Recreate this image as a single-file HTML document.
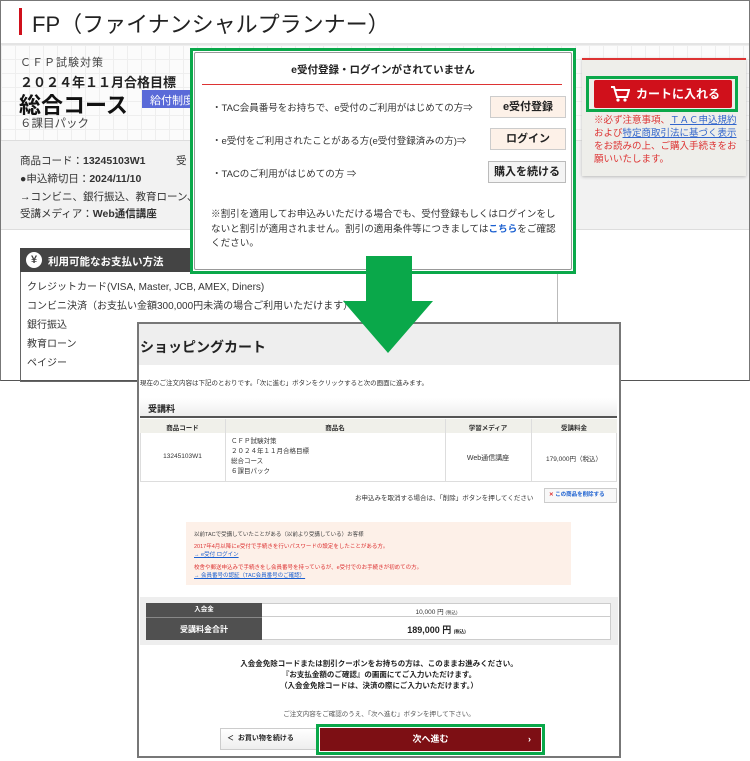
<!DOCTYPE html>
<html><head><meta charset="utf-8"><style>
*{margin:0;padding:0;box-sizing:border-box}
body{width:750px;height:761px;position:relative;background:#fff;font-family:"Liberation Sans","Noto Sans CJK JP",sans-serif;color:#333;overflow:hidden}
.a{position:absolute;white-space:nowrap}
.b{font-weight:bold}
</style></head><body>
<div class="a" style="left:0;top:0;width:750px;height:381px;border:1px solid #777;border-bottom:1px solid #555"></div>
<div class="a" style="left:19px;top:8px;width:3px;height:27px;background:#d0101b"></div>
<div class="a" style="left:32px;top:7px;font-size:22px;color:#222">FP（ファイナンシャルプランナー）</div>
<div class="a" style="left:1px;top:43px;width:748px;height:2px;background:#e4e4e4"></div>
<div class="a" style="left:1px;top:45px;width:748px;height:95px;background-color:#fbfbfb;background-image:linear-gradient(#eee 1px,transparent 1px),linear-gradient(90deg,#eee 1px,transparent 1px);background-size:14px 14px"></div>
<div class="a" style="left:1px;top:140px;width:748px;height:90px;background:#f2f2f2;border-top:1px solid #ddd;border-bottom:1px solid #ddd"></div>
<div class="a" style="left:20px;top:54px;font-size:11px;color:#444;letter-spacing:1px">ＣＦＰ試験対策</div>
<div class="a b" style="left:20px;top:72px;font-size:13px;color:#222">２０２４年１１月合格目標</div>
<div class="a b" style="left:19px;top:88px;font-size:22px;color:#111">総合コース</div>
<div class="a" style="left:142px;top:90px;width:50px;height:18px;background:#5a6ad8;color:#fff;font-size:11px;padding:2px 0 0 8px">給付制度</div>
<div class="a" style="left:20px;top:115px;font-size:11.5px;color:#444">６課目パック</div>
<div class="a" style="left:20px;top:153px;font-size:10.5px">商品コード：<b>13245103W1</b></div>
<div class="a" style="left:176px;top:153px;font-size:10.5px">受</div>
<div class="a" style="left:20px;top:171px;font-size:10.5px">●申込締切日：<b>2024/11/10</b></div>
<div class="a" style="left:20px;top:189px;font-size:10.5px">→コンビニ、銀行振込、教育ローン、ペ</div>
<div class="a" style="left:20px;top:206px;font-size:10.5px">受講メディア：<b>Web通信講座</b></div>
<div class="a" style="left:20px;top:248px;width:538px;height:134px;border:1px solid #666"></div>
<div class="a" style="left:20px;top:248px;width:538px;height:24px;background:#444"></div>
<div class="a" style="left:26px;top:252px;width:16px;height:16px;border-radius:50%;background:#fff;color:#444;font-size:11px;font-weight:bold;text-align:center;line-height:16px">¥</div>
<div class="a b" style="left:48px;top:254px;font-size:10.5px;color:#fff">利用可能なお支払い方法</div>
<div class="a" style="left:27px;top:278px;font-size:10px;line-height:19px;white-space:normal;width:520px">クレジットカード(VISA, Master, JCB, AMEX, Diners)<br>コンビニ決済（お支払い金額300,000円未満の場合ご利用いただけます）<br>銀行振込<br>教育ローン<br>ペイジー</div>
<div class="a" style="left:557px;top:230px;width:1px;height:151px;background:#bbb"></div>
<div class="a" style="left:582px;top:58px;width:164px;height:118px;background:#eeeeea;border-top:2px solid #d33;box-shadow:0 1px 3px #bbb"></div>
<div class="a" style="left:586px;top:76px;width:152px;height:36px;border:3px solid #0aa84a"></div>
<div class="a b" style="left:594px;top:80px;width:138px;height:28px;background:#d0101b;border-radius:2px;color:#fff;font-size:12px;line-height:28px;padding-left:42px">カートに入れる</div>
<svg class="a" style="left:610px;top:85px" width="20" height="18" viewBox="0 0 20 18"><path d="M1 2h3l3 10h10l2-7H5" fill="none" stroke="#fff" stroke-width="2"/><circle cx="8" cy="15" r="1.6" fill="#fff"/><circle cx="15" cy="15" r="1.6" fill="#fff"/></svg>
<div class="a" style="left:594px;top:114px;width:145px;font-size:9.5px;line-height:13px;color:#d33;white-space:normal">※必ず注意事項、<u style="color:#36c">ＴＡＣ申込規約</u>および<u style="color:#36c">特定商取引法に基づく表示</u>をお読みの上、ご購入手続きをお願いいたします。</div>
<div class="a" style="left:190px;top:48px;width:386px;height:226px;border:3px solid #0aa84a;background:#fff"></div>
<div class="a" style="left:194px;top:52px;width:378px;height:218px;border:1px solid #999;border-radius:2px"></div>
<div class="a b" style="left:194px;top:62px;width:378px;text-align:center;font-size:10.5px;color:#222">e受付登録・ログインがされていません</div>
<div class="a" style="left:202px;top:84px;width:360px;height:1px;background:#d33"></div>
<div class="a" style="left:212px;top:100px;font-size:9.5px">・TAC会員番号をお持ちで、e受付のご利用がはじめての方⇒</div>
<div class="a" style="left:212px;top:133px;font-size:9.5px">・e受付をご利用されたことがある方(e受付登録済みの方)⇒</div>
<div class="a" style="left:212px;top:166px;font-size:9.5px">・TACのご利用がはじめての方 ⇒</div>
<div class="a b" style="left:490px;top:96px;width:76px;height:22px;background:#fdf1e8;border:1px solid #ccc;font-size:11px;text-align:center;line-height:20px;color:#222">e受付登録</div>
<div class="a b" style="left:490px;top:128px;width:76px;height:22px;background:#fdf1e8;border:1px solid #ccc;font-size:11px;text-align:center;line-height:20px;color:#222">ログイン</div>
<div class="a b" style="left:488px;top:161px;width:78px;height:22px;background:#f4f4f4;border:1px solid #bbb;font-size:11px;text-align:center;line-height:20px;color:#222">購入を続ける</div>
<div class="a" style="left:211px;top:208px;width:352px;font-size:9.6px;line-height:14.5px;white-space:normal">※割引を適用してお申込みいただける場合でも、受付登録もしくはログインをしないと割引が適用されません。割引の適用条件等につきましては<b style="color:#1a5fd0">こちら</b>をご確認ください。</div>
<div class="a" style="left:137px;top:322px;width:484px;height:436px;border:2px solid #777;background:#fff"></div>
<div class="a" style="left:139px;top:324px;width:480px;height:41px;background:#eee"></div>
<div class="a b" style="left:140px;top:337px;font-size:14px;color:#222">ショッピングカート</div>
<div class="a" style="left:140px;top:377px;font-size:6.5px">現在のご注文内容は下記のとおりです。「次に進む」ボタンをクリックすると次の画面に進みます。</div>
<div class="a" style="left:140px;top:398px;width:477px;height:20px;background:linear-gradient(#fff,#eee);border-bottom:2px solid #555"></div>
<div class="a b" style="left:148px;top:402px;font-size:9px;color:#222">受講料</div>
<div class="a" style="left:140px;top:419px;width:477px;height:63px;border:1px solid #ddd"></div>
<div class="a" style="left:140px;top:419px;width:477px;height:14px;background:#f0f0ea"></div>
<div class="a" style="left:225px;top:419px;width:1px;height:63px;background:#ddd"></div>
<div class="a" style="left:445px;top:419px;width:1px;height:63px;background:#ddd"></div>
<div class="a" style="left:531px;top:419px;width:1px;height:63px;background:#ddd"></div>
<div class="a b" style="left:140px;top:422px;width:85px;text-align:center;font-size:6.5px">商品コード</div>
<div class="a b" style="left:225px;top:422px;width:220px;text-align:center;font-size:6.5px">商品名</div>
<div class="a b" style="left:445px;top:422px;width:86px;text-align:center;font-size:6.5px">学習メディア</div>
<div class="a b" style="left:531px;top:422px;width:86px;text-align:center;font-size:6.5px">受講料金</div>
<div class="a" style="left:140px;top:453px;width:85px;text-align:center;font-size:6.5px">13245103W1</div>
<div class="a" style="left:231px;top:437px;font-size:6.5px;line-height:10px">ＣＦＰ試験対策<br>２０２４年１１月合格目標<br>総合コース<br>６課目パック</div>
<div class="a" style="left:445px;top:453px;width:86px;text-align:center;font-size:7px">Web通信講座</div>
<div class="a" style="left:531px;top:453px;width:86px;text-align:center;font-size:6.5px">179,000円（税込）</div>
<div class="a" style="left:355px;top:492px;font-size:6.5px">お申込みを取消する場合は、「削除」ボタンを押してください</div>
<div class="a b" style="left:544px;top:488px;width:73px;height:15px;border:1px solid #ccc;background:#f8f8f8;font-size:5.5px;line-height:13px;padding-left:4px;color:#1a5fd0"><span style="color:#d33">✕</span> この商品を削除する</div>
<div class="a" style="left:186px;top:522px;width:385px;height:63px;background:#fdf0e8"></div>
<div class="a" style="left:194px;top:530px;font-size:5.5px;line-height:10.5px;color:#444">以前TACで受講していたことがある（以前より受講している）お客様</div>
<div class="a" style="left:194px;top:543px;font-size:5.5px;line-height:8px;color:#d33">2017年4月以降にe受付で手続きを行いパスワードの設定をしたことがある方。<br><u style="color:#1a5fd0">→ e受付 ログイン</u></div>
<div class="a" style="left:194px;top:564px;font-size:5.5px;line-height:8px;color:#d33">校舎や郵送申込みで手続きをし会員番号を持っているが、e受付でのお手続きが初めての方。<br><u style="color:#1a5fd0">→ 会員番号の認証（TAC会員番号のご確認）</u></div>
<div class="a" style="left:140px;top:597px;width:478px;height:48px;background:#eee"></div>
<div class="a" style="left:146px;top:603px;width:465px;height:37px;background:#fff;border:1px solid #ccc"></div>
<div class="a b" style="left:146px;top:603px;width:116px;height:14px;background:#505050;color:#fff;font-size:6.5px;text-align:center;line-height:14px">入会金</div>
<div class="a b" style="left:146px;top:617px;width:116px;height:23px;background:#505050;color:#fff;font-size:8px;text-align:center;line-height:23px;border-top:1px solid #888">受講料金合計</div>
<div class="a" style="left:262px;top:616px;width:349px;height:1px;background:#ccc"></div>
<div class="a" style="left:262px;top:606px;width:349px;text-align:center;font-size:6.5px">10,000 円 <small style="font-size:4.5px">(税込)</small></div>
<div class="a b" style="left:262px;top:623px;width:349px;text-align:center;font-size:9px;color:#222">189,000 円 <small style="font-size:4.5px">(税込)</small></div>
<div class="a b" style="left:137px;top:658px;width:484px;text-align:center;font-size:7.5px;line-height:11px;color:#222">入会金免除コードまたは割引クーポンをお持ちの方は、このままお進みください。<br>『お支払金額のご確認』の画面にてご入力いただけます。<br>（入会金免除コードは、決済の際にご入力いただけます。）</div>
<div class="a" style="left:137px;top:708px;width:484px;text-align:center;font-size:6.5px;color:#555">ご注文内容をご確認のうえ、「次へ進む」ボタンを押して下さい。</div>
<div class="a b" style="left:220px;top:728px;width:97px;height:22px;background:linear-gradient(#fff,#eee);border:1px solid #ccc;font-size:7px;line-height:20px;padding-left:6px;color:#222">＜ &nbsp;お買い物を続ける</div>
<div class="a" style="left:316px;top:724px;width:229px;height:31px;border:3px solid #0aa84a"></div>
<div class="a b" style="left:320px;top:728px;width:221px;height:23px;background:#7d0f14;color:#fff;font-size:9px;text-align:center;line-height:23px">次へ進む<span style="position:absolute;right:10px">›</span></div>
<svg class="a" style="left:340px;top:256px" width="96" height="100" viewBox="0 0 96 100"><path d="M26 0h46v45h21L48 97 3 45h23z" fill="#0aa84a"/></svg>
</body></html>
